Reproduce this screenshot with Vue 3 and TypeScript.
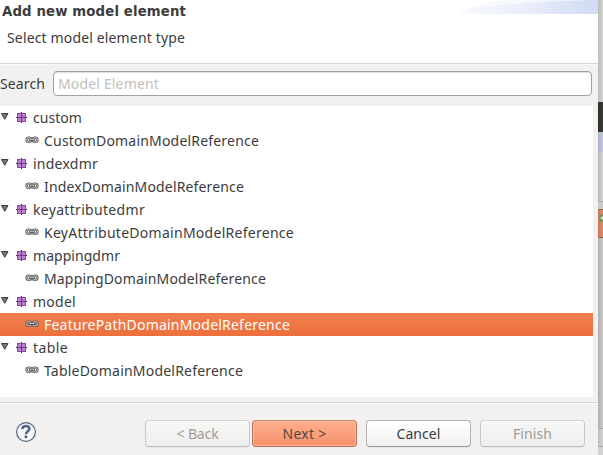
<script setup lang="ts">
interface Row {
  label: string
  width: number
  kind: 'package' | 'reference'
  selected?: boolean
}

const rows: Row[] = [
  { label: 'custom', width: 49, kind: 'package' },
  { label: 'CustomDomainModelReference', width: 215, kind: 'reference' },
  { label: 'indexdmr', width: 65, kind: 'package' },
  { label: 'IndexDomainModelReference', width: 200, kind: 'reference' },
  { label: 'keyattributedmr', width: 112, kind: 'package' },
  { label: 'KeyAttributeDomainModelReference', width: 250, kind: 'reference' },
  { label: 'mappingdmr', width: 87, kind: 'package' },
  { label: 'MappingDomainModelReference', width: 222, kind: 'reference' },
  { label: 'model', width: 43, kind: 'package' },
  { label: 'FeaturePathDomainModelReference', width: 246, kind: 'reference', selected: true },
  { label: 'table', width: 35, kind: 'package' },
  { label: 'TableDomainModelReference', width: 199, kind: 'reference' },
]

const buttons = [
  { label: '< Back', width: 42, state: 'disabled' },
  { label: 'Next >', width: 44, state: 'primary' },
  { label: 'Cancel', width: 44, state: 'normal' },
  { label: 'Finish', width: 39, state: 'disabled' },
]

// Tracks the letters of a label so that it fills the given width.
const vFit = (el: HTMLElement, binding: { value: number }) => {
  const apply = () => {
    el.style.letterSpacing = '0px'
    const natural = el.getBoundingClientRect().width
    const count = (el.textContent ?? '').length
    if (natural > 0 && count > 0) {
      el.style.letterSpacing = `${(binding.value - natural) / count}px`
    }
  }
  requestAnimationFrame(apply)
}
</script>

<template>
  <div class="screen">
    <main class="dialog">
      <header class="header">
        <svg class="swoosh" width="143" height="14" viewBox="0 0 143 14">
          <defs>
            <linearGradient id="wave" x1="0" x2="1">
              <stop offset="0" stop-color="#f8fafe" />
              <stop offset=".45" stop-color="#ebeff9" />
              <stop offset="1" stop-color="#d0daf4" />
            </linearGradient>
          </defs>
          <path d="M2 14C16 7 34 2 58 0H143V14Z" fill="url(#wave)" />
          <path d="M20 8C35 3 48 1 58 0H139C96 1 55 4 20 8Z" fill="#fff" opacity=".55" />
        </svg>
        <h1><span v-fit="184">Add new model element</span></h1>
        <p><span v-fit="178">Select model element type</span></p>
      </header>
      <section class="search">
        <label><span v-fit="45">Search</span></label>
        <div class="field"><span v-fit="101">Model Element</span></div>
      </section>
      <section class="tree">
        <div v-for="row in rows" :key="row.label" class="row" :class="[row.kind, { selected: row.selected }]">
          <template v-if="row.kind === 'package'">
            <svg class="arrow" width="8" height="7" viewBox="0 0 8 7">
              <path d="M.5 .5H7L3.75 6.3Z" fill="#777" stroke="#3c3c3c" stroke-width="1" />
            </svg>
            <svg class="package-icon" width="11" height="11" viewBox="0 0 11 11">
              <rect x="1" y="1" width="9" height="9" fill="#8f47a8" />
              <path d="M2 2h3v3H2zM6 2h3v3H6zM2 6h3v3H2zM6 6h3v3H6z" fill="#bd7fd0" />
              <path d="M5.5 1V10M1 5.5H10" stroke="#7c3a93" stroke-width="1" />
              <path d="M5.5 0V1M5.5 10V11M0 5.5H1M10 5.5H11M5.5 5V6" stroke="#3f1b50" stroke-width="1" />
            </svg>
          </template>
          <svg v-else class="link-icon" width="14" height="8" viewBox="0 0 14 8">
            <g fill="none" stroke="#5c5c5c" stroke-width="2.4">
              <rect x="1.6" y="1.6" width="4.7" height="4.3" rx="2.1" />
              <rect x="7.7" y="1.6" width="4.7" height="4.3" rx="2.1" />
            </g>
            <g fill="none" stroke="#c4c4c4" stroke-width="1">
              <rect x="1.6" y="1.6" width="4.7" height="4.3" rx="2.1" />
              <rect x="7.7" y="1.6" width="4.7" height="4.3" rx="2.1" />
            </g>
            <path d="M4 3.8H10" stroke="#444" stroke-width="1.8" />
            <path d="M4.5 3.6H9.5" stroke="#ddd" stroke-width=".8" />
          </svg>
          <span v-fit="row.width">{{ row.label }}</span>
        </div>
      </section>
      <footer class="footer">
        <svg class="help" width="22" height="22" viewBox="0 0 22 22">
          <circle cx="11" cy="11" r="9.4" fill="#f5f6f8" stroke="#546380" stroke-width="1.2" />
          <path d="M7.4 8.1C7.4 3.9 14.5 4 14.4 7.8C14.3 10.2 11 10.2 11 13.2" fill="none" stroke="#52648c" stroke-width="2.6" />
          <rect x="9.6" y="14.6" width="2.7" height="2.6" rx=".6" fill="#52648c" />
        </svg>
        <button v-for="b in buttons" :key="b.label" :class="b.state" type="button">
          <span v-fit="b.width">{{ b.label }}</span>
        </button>
      </footer>
    </main>
    <aside class="behind">
      <div class="b-top"></div>
      <div class="b-dark"></div>
      <div class="b-blue"></div>
      <div class="b-gray"></div>
      <div class="b-orange">
        <svg width="4" height="8" viewBox="0 0 4 8">
          <circle cx="4" cy="4" r="3.8" fill="#58985a" />
          <path d="M1.5 4H4M4 2V6" stroke="#e5f2e2" stroke-width="1.5" />
        </svg>
      </div>
      <div class="b-rest"></div>
      <div class="b-status"></div>
      <div class="b-end"></div>
    </aside>
  </div>
</template>

<style>
body {
  margin: 0;
  overflow: hidden;
}
</style>

<style scoped>
.screen {
  display: flex;
  width: 603px;
  height: 455px;
  overflow: hidden;
  background: #f2f1f0;
  color: #3c3c3c;
  font-family: "Noto Sans", "Open Sans", sans-serif;
  font-size: 14px;
  line-height: 23px;
  white-space: nowrap;
}
.screen * {
  box-sizing: border-box;
}
.dialog {
  width: 598px;
}
.header {
  position: relative;
  height: 64px;
  background: #fff;
  border-bottom: 1px solid #d6d5d4;
}
.swoosh {
  position: absolute;
  top: 0;
  right: 0;
}
h1 {
  margin: 0;
  padding-left: 2px;
  height: 26px;
  font-family: "DejaVu Sans", sans-serif;
  font-size: 13.3px;
  font-weight: bold;
  line-height: 24px;
}
p {
  margin: 0;
  padding-left: 7px;
}
.search {
  display: flex;
  height: 42px;
  padding: 6px 6px 0 0;
  border-top: 1px solid #f9f9f8;
}
label {
  width: 53px;
  line-height: 26px;
}
.field {
  flex: 1;
  height: 25px;
  padding-left: 4px;
  border: 1px solid #a3a19f;
  border-radius: 4px;
  background: #fff;
  box-shadow: inset 0 1px 1px #ddd;
  color: #c4bfba;
  line-height: 24px;
}
.tree {
  width: 593px;
  height: 291px;
  background: #fff;
}
.row {
  display: flex;
  height: 23px;
}
.package {
  padding-left: 1px;
}
.reference {
  padding-left: 25px;
}
.arrow {
  margin: 7px 7px 0 0;
}
.package-icon {
  margin: 6px 6px 0 0;
}
.link-icon {
  margin: 7px 5px 0 0;
}
.selected {
  background: linear-gradient(#ed7443, #f27d4d 2px, #ec6f3c);
  color: #fff;
}
.footer {
  display: flex;
  height: 53px;
  margin-top: 5px;
  padding: 17px 13px 0 15px;
  border-top: 1px solid #d7d6d5;
  box-shadow: inset 0 1px #fafafa;
}
.help {
  margin: 1px 108px 0 0;
}
button {
  width: 105px;
  height: 27px;
  padding: 0;
  margin-right: 9px;
  border: 1px solid #b5b3b1;
  border-bottom-color: #989694;
  border-radius: 4px;
  background: linear-gradient(#fff, #f2f1f0);
  box-shadow: inset 0 1px #fff, 0 1px #e8e7e6;
  color: #3c3c3c;
  font: inherit;
  line-height: 25px;
}
button:first-of-type {
  margin-right: 2px;
}
button:last-child {
  margin-right: 0;
}
.disabled {
  border-color: #d2d1d0 #cbc9c8 #bdbbb9;
  background: linear-gradient(#f7f7f6, #efeeed);
  color: #a09d9a;
}
.primary {
  border-color: #c38770 #ae765f #a96e57;
  background: linear-gradient(#ffaf8f, #f69169);
  box-shadow: inset 0 0 0 1px #ffb79a;
  color: #514740;
}
.behind {
  width: 5px;
}
.b-top {
  height: 102px;
  background: linear-gradient(90deg, #bcbbba, #d8d7d6);
}
.b-dark {
  height: 30px;
  background: linear-gradient(90deg, #2e2d2a, #3c3b37);
}
.b-blue {
  height: 20px;
  background: linear-gradient(90deg, #a9b1c5, #c1cadd);
}
.b-gray {
  height: 57px;
  border-bottom: 7px solid #cbcac9;
  background: linear-gradient(90deg, #b8b8b8, #d5d5d5);
  box-shadow: inset 0 -1px #aaa;
}
.b-orange {
  height: 29px;
  padding: 4px 0 0 1px;
  border-top: 1px solid #985a44;
  border-bottom: 1px solid #985a44;
  background: linear-gradient(90deg, #c9765a, #e18a67);
}
.b-orange svg {
  display: block;
}
.b-rest {
  height: 190px;
  background: linear-gradient(90deg, #b0b0af, #cbcac9);
}
.b-status {
  height: 19px;
  border-top: 1px solid #aaa;
  border-bottom: 1px solid #aaa;
  background: linear-gradient(90deg, #bdbcbb, #d3d2d1);
}
.b-end {
  height: 8px;
  background: #d2d2d3;
}
</style>
